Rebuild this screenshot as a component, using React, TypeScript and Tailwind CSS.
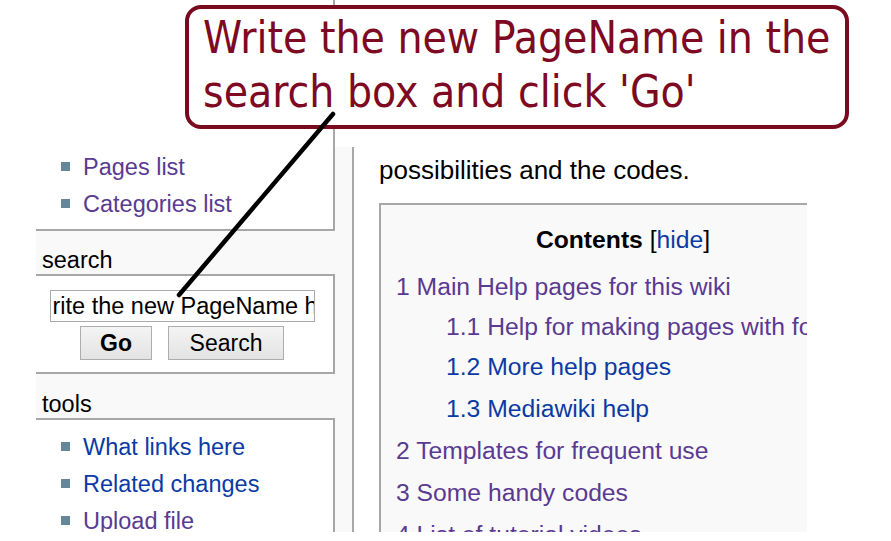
import React from 'react';

const VISITED = 'text-[#5a3a92]';
const LINK = 'text-[#0b3aa5]';

const Bullet = () => <span className="mr-[13px] inline-block h-[9px] w-[9px] shrink-0 bg-[#65879a]" />;

const SideItem = ({ label, color }: { label: string; color: string }) => (
  <li className="flex h-[37px] shrink-0 items-center pl-[25px]">
    <Bullet />
    <span className={color}>{label}</span>
  </li>
);

const TocItem = ({ label, color, sub, h }: { label: string; color: string; sub?: boolean; h: string }) => (
  <div className={`flex items-center whitespace-nowrap ${h} ${sub ? 'pl-[65px]' : 'pl-[15px]'} ${color}`}>{label}</div>
);

export default function App() {
  return (
    <div className="relative h-[541px] w-[891px] overflow-hidden bg-white font-['Liberation_Sans',Arial,sans-serif] text-black">
      <div className="flex h-[532px] pl-[36px]">
        {/* sidebar portlets */}
        <div className="flex w-[299px] flex-col overflow-hidden bg-[#f9f9f9] text-[23.5px] leading-[28px]">
          <ul className="flex h-[231px] shrink-0 flex-col justify-end border-r-2 border-b-2 border-[#a7a7a7] bg-white pb-[7px]">
            <SideItem label="Pages list" color={VISITED} />
            <SideItem label="Categories list" color={VISITED} />
          </ul>
          <div className="h-[43px] shrink-0 pl-[6px] pt-[15px]">search</div>
          <div className="flex h-[100px] shrink-0 flex-col items-center border-t-2 border-r-2 border-b-2 border-[#a7a7a7] bg-white pr-[5px] pt-[14px]">
            <div className="h-[32px] w-[265px] overflow-hidden whitespace-nowrap border border-[#a9a9a9] bg-white pl-[2px] leading-[30px] text-[23.5px]">
              rite the new PageName here
            </div>
            <div className="mt-[4px] flex gap-[16px]">
              <button className="h-[34px] w-[72px] border border-[#adadad] bg-gradient-to-b from-[#f4f4f4] to-[#e3e3e3] text-[23px] font-bold">
                Go
              </button>
              <button className="h-[34px] w-[116px] border border-[#adadad] bg-gradient-to-b from-[#f4f4f4] to-[#e3e3e3] text-[23px]">
                Search
              </button>
            </div>
          </div>
          <div className="h-[44px] shrink-0 pl-[6px] pt-[16px]">tools</div>
          <ul className="min-h-0 flex-1 border-t-2 border-r-2 border-[#a7a7a7] bg-white pt-[8px]">
            <SideItem label="What links here" color={LINK} />
            <SideItem label="Related changes" color={LINK} />
            <SideItem label="Upload file" color={VISITED} />
          </ul>
        </div>

        {/* gutter */}
        <div className="mt-[147px] w-[17px] bg-[#f9f9f9]" />

        {/* content */}
        <div className="mt-[147px] flex w-[455px] flex-col overflow-hidden border-l-2 border-[#a7a7a7] pl-[25px]">
          <p className="pt-[8px] text-[26px] leading-[30px]">possibilities and the codes.</p>
          <div className="mt-[18px] w-[486px] flex-1 border-t-2 border-l-2 border-[#a7a7a7] bg-[#f9f9f9] pt-[21px] text-[24.7px]">
            <div className="text-center leading-[28px]">
              <span className="font-bold">Contents</span> [<span className={LINK}>hide</span>]
            </div>
            <div className="mt-[13px]">
              <TocItem h="h-[40px]" color={VISITED} label="1 Main Help pages for this wiki" />
              <TocItem h="h-[39px]" color={VISITED} sub label="1.1 Help for making pages with formatting" />
              <TocItem h="h-[42px]" color={LINK} sub label="1.2 More help pages" />
              <TocItem h="h-[42px]" color={LINK} sub label="1.3 Mediawiki help" />
              <TocItem h="h-[42px]" color={VISITED} label="2 Templates for frequent use" />
              <TocItem h="h-[42px]" color={VISITED} label="3 Some handy codes" />
              <TocItem h="h-[42px]" color={VISITED} label="4 List of tutorial videos" />
            </div>
          </div>
        </div>
      </div>

      {/* callout */}
      <div className="absolute left-[185px] top-[5px] h-[124px] w-[664px] rounded-[16px] border-4 border-[#7a0a1e] bg-white pl-[14px] pt-[2px] font-['DejaVu_Sans_Condensed','DejaVu_Sans',sans-serif] text-[44px] leading-[54px] text-[#7d0a22]">
        <div>Write the new PageName in the</div>
        <div>search box and click 'Go'</div>
      </div>
      <svg className="pointer-events-none absolute left-0 top-0" width="891" height="541">
        <line x1="333" y1="114" x2="179" y2="295" stroke="#000" strokeWidth="4.5" strokeLinecap="round" />
      </svg>
    </div>
  );
}
